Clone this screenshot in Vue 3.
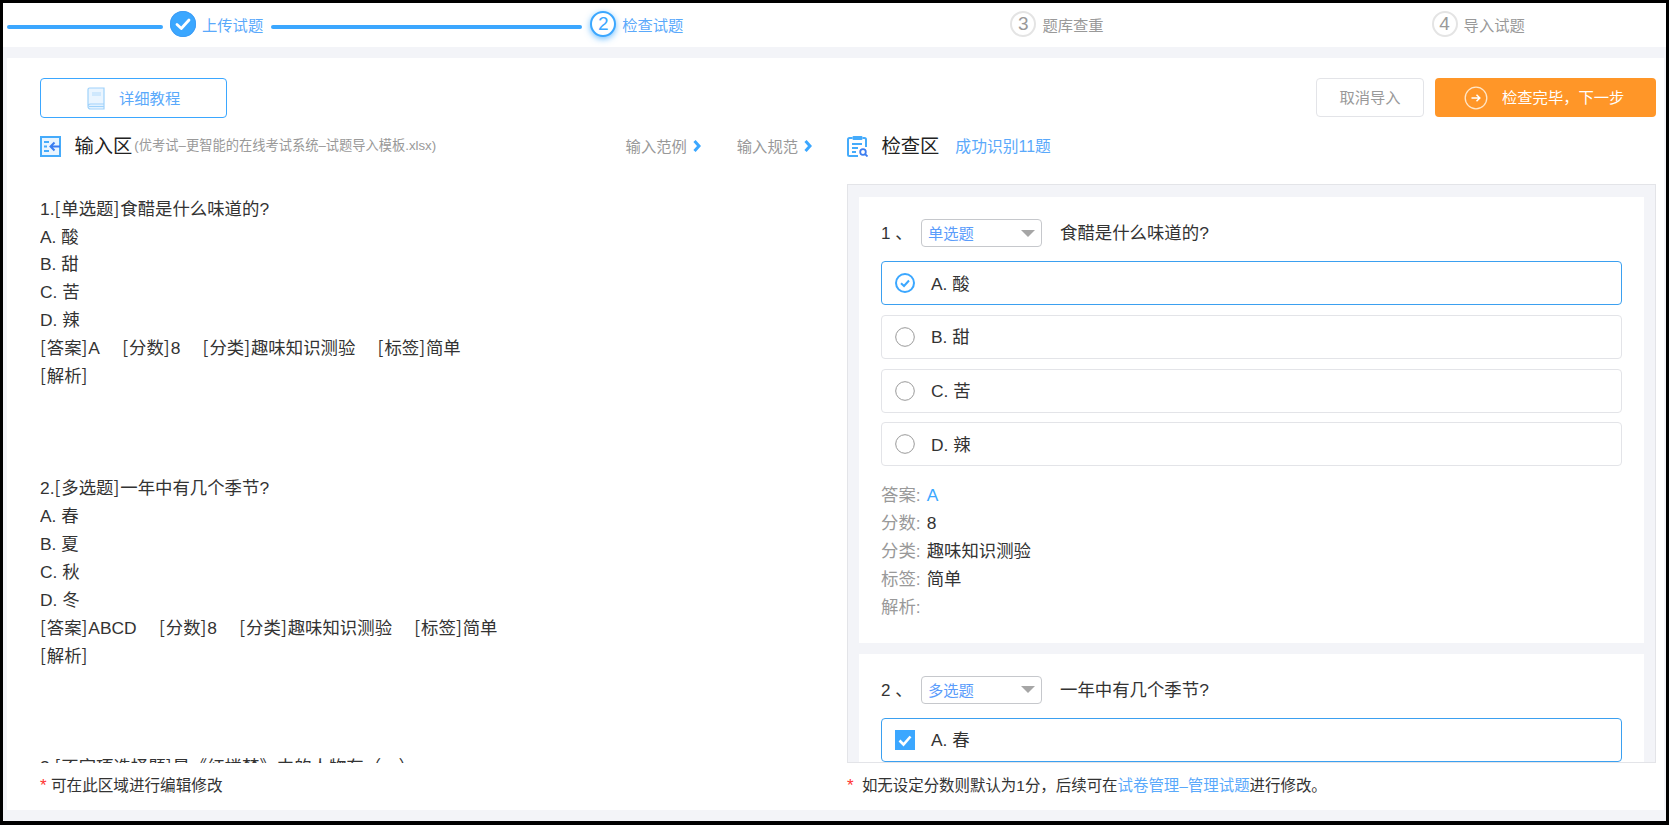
<script setup>
const leftBlocks = [
  ['1.[单选题]食醋是什么味道的?', 'A. 酸', 'B. 甜', 'C. 苦', 'D. 辣', '[答案]A|[分数]8|[分类]趣味知识测验|[标签]简单', '[解析]', '', '', ''],
  ['2.[多选题]一年中有几个季节?', 'A. 春', 'B. 夏', 'C. 秋', 'D. 冬', '[答案]ABCD|[分数]8|[分类]趣味知识测验|[标签]简单', '[解析]', '', '', ''],
  ['3.[不定项选择题]是《红楼梦》中的人物有（　）']
]
const leftLines = leftBlocks.flat().map(line => line.split('|').map(field => field.split(/(\[|\])/)))
const options = [
  { text: 'A. 酸', on: true },
  { text: 'B. 甜', on: false },
  { text: 'C. 苦', on: false },
  { text: 'D. 辣', on: false }
]
const meta = [
  ['分数:', '8'],
  ['分类:', '趣味知识测验'],
  ['标签:', '简单'],
  ['解析:', '']
]
</script>

<template>
  <div class="shell">
    <header class="steps">
      <span class="line first"></span>
      <div class="step active">
        <span class="dot done">
          <svg width="16" height="14" viewBox="0 0 16 14"><path d="M2 7.5 6.3 11.5 14 3" fill="none" stroke="#fff" stroke-width="2.8" stroke-linecap="round" stroke-linejoin="round"/></svg>
        </span>
        <span class="label">上传试题</span>
      </div>
      <span class="line second"></span>
      <div class="step active">
        <span class="dot current">2</span>
        <span class="label">检查试题</span>
      </div>
      <div class="step third">
        <span class="dot idle">3</span>
        <span class="label">题库查重</span>
      </div>
      <div class="step fourth">
        <span class="dot idle">4</span>
        <span class="label">导入试题</span>
      </div>
    </header>

    <div class="canvas">
      <main class="panel">
        <div class="toolbar">
          <button class="tutorial">
            <svg class="book" width="18" height="23" viewBox="0 0 18 23">
              <path d="M1 19V2.5C1 1.7 1.7 1 2.5 1H17V22H3.5C2 22 1 21 1 19.5 1 18 2 17 3.5 17H17" fill="#eaf5ff" stroke="#9fd2fb" stroke-width="1.2"/>
              <path d="M5 5h9v4H5z" fill="#cfe8fd"/>
              <path d="M2 19.5h15" stroke="#9fd2fb" stroke-width="1.2"/>
            </svg>
            <span class="label">详细教程</span>
          </button>
          <div class="actions">
            <button class="cancel">取消导入</button>
            <button class="next">
              <svg width="24" height="24" viewBox="0 0 24 24">
                <circle cx="12" cy="12" r="10.8" fill="none" stroke="#ffe6c8" stroke-width="1.3"/>
                <path d="M7.5 12h8M12.5 8.8 15.8 12l-3.3 3.2" fill="none" stroke="#fff" stroke-width="1.5"/>
              </svg>
              <span class="label">检查完毕，下一步</span>
            </button>
          </div>
        </div>

        <div class="cols">
          <section class="col">
            <div class="head">
              <svg class="head-icon" width="21" height="21" viewBox="0 0 21 21">
                <rect x="1" y="1" width="19" height="19" fill="#eaf5ff" stroke="#45abfb" stroke-width="2"/>
                <path d="M4 6h5M4 10.500h3M4 15h5" stroke="#45abfb" stroke-width="2"/>
                <path d="M20 10.500h-9M14.500 6.500l-4 4 4 4" fill="none" stroke="#3c7df0" stroke-width="2"/>
              </svg>
              <h2>输入区</h2>
              <span class="file">(优考试–更智能的在线考试系统–试题导入模板.xlsx)</span>
              <a class="more first-more"><span>输入范例</span>
                <svg width="8" height="12" viewBox="0 0 8 12"><path d="M1.500 1 6 6l-4.500 5" fill="none" stroke="#3ba7ff" stroke-width="3"/></svg>
              </a>
              <a class="more"><span>输入规范</span>
                <svg width="8" height="12" viewBox="0 0 8 12"><path d="M1.500 1 6 6l-4.500 5" fill="none" stroke="#3ba7ff" stroke-width="3"/></svg>
              </a>
            </div>
            <div class="source">
              <div v-for="(line, i) in leftLines" :key="i" class="source-line">
                <span v-for="(field, j) in line" :key="j" class="field"><span v-for="(seg, k) in field" :key="k" :class="{ bracket: seg === '[' || seg === ']' }">{{ seg }}</span></span>
              </div>
            </div>
            <p class="note"><i>*</i> 可在此区域进行编辑修改</p>
          </section>

          <section class="col">
            <div class="head">
              <svg class="head-icon" width="21" height="22" viewBox="0 0 21 22">
                <path d="M5.500 3H2.500C1.700 3 1 3.700 1 4.500V19.500C1 20.300 1.700 21 2.500 21H11M15.500 3H17.500C18.300 3 19 3.700 19 4.500V12" fill="none" stroke="#45abfb" stroke-width="2"/>
                <rect x="5.500" y="1" width="10" height="4" rx="1" fill="#45abfb"/>
                <path d="M5 9h10M5 13h6M5 17h4" stroke="#45abfb" stroke-width="2"/>
                <circle cx="16" cy="17" r="2.800" fill="none" stroke="#3c7df0" stroke-width="1.800"/>
                <path d="M18 19l2.500 2.500" stroke="#3c7df0" stroke-width="1.800"/>
              </svg>
              <h2>检查区</h2>
              <span class="found">成功识别11题</span>
            </div>
            <div class="review">
              <article class="card">
                <div class="q-row">
                  <span class="num">1 、</span>
                  <div class="select"><span>单选题</span><b class="caret"></b></div>
                  <span class="q-title">食醋是什么味道的?</span>
                </div>
                <div v-for="o in options" :key="o.text" class="option" :class="{ on: o.on }">
                  <svg v-if="o.on" width="20" height="20" viewBox="0 0 20 20">
                    <circle cx="10" cy="10" r="9" fill="none" stroke="#3ba7ff" stroke-width="2"/>
                    <path d="M6 10.200 9 13l5-5.500" fill="none" stroke="#3ba7ff" stroke-width="2"/>
                  </svg>
                  <svg v-else width="20" height="20" viewBox="0 0 20 20">
                    <circle cx="10" cy="10" r="9.300" fill="none" stroke="#999" stroke-width="1"/>
                  </svg>
                  <span>{{ o.text }}</span>
                </div>
                <dl class="meta">
                  <div><dt>答案:</dt><dd class="answer">A</dd></div>
                  <div v-for="m in meta" :key="m[0]"><dt>{{ m[0] }}</dt><dd>{{ m[1] }}</dd></div>
                </dl>
              </article>
              <article class="card">
                <div class="q-row">
                  <span class="num">2 、</span>
                  <div class="select"><span>多选题</span><b class="caret"></b></div>
                  <span class="q-title">一年中有几个季节?</span>
                </div>
                <div class="option on">
                  <svg width="20" height="20" viewBox="0 0 20 20">
                    <rect width="20" height="20" fill="#3ba7ff"/>
                    <path d="M4.500 10.500 8.500 14.500 15.500 6.500" fill="none" stroke="#fff" stroke-width="2.600"/>
                  </svg>
                  <span>A. 春</span>
                </div>
              </article>
            </div>
            <p class="note wide"><i>*</i> 如无设定分数则默认为1分，后续可在<a>试卷管理–管理试题</a>进行修改。</p>
          </section>
        </div>
      </main>
    </div>
  </div>
</template>

<style>
html, body { margin: 0; background: #000; }
</style>

<style scoped>
.shell {
  box-sizing: border-box;
  width: 1669px;
  height: 825px;
  padding: 3px 3px 4px;
  background: #000;
  display: flex;
  flex-direction: column;
  font-family: "Liberation Sans", "Noto Sans CJK SC", sans-serif;
  color: #333;
  overflow: hidden;
}
.steps {
  flex: none;
  height: 44px;
  background: #fff;
  display: flex;
  align-items: center;
  padding-left: 4px;
  box-sizing: border-box;
  font-size: 15.300px;
}
.line {
  height: 4px;
  border-radius: 2px;
  background: #3ba7ff;
  margin-top: 3px;
  flex: none;
}
.line.first { width: 156px; margin-right: 7px; }
.line.second { width: 311px; margin: 3px 8px 0 8px; }
.step {
  display: flex;
  align-items: center;
  gap: 6px;
  color: #999;
  flex: none;
}
.step.active { color: #5aa9fb; }
.step.third { margin-left: 327px; }
.step.fourth { margin-left: 328px; }
.label { margin-bottom: 3px; }
.dot {
  box-sizing: border-box;
  width: 26px;
  height: 26px;
  border-radius: 50%;
  display: flex;
  align-items: center;
  justify-content: center;
  font-size: 19px;
  margin-top: -2px;
}
.done { background: #3ba7ff; box-shadow: inset 0 0 0 1px #3f9df5; }
.current {
  border: 2px solid #3ba7ff;
  color: #3ba7ff;
  background: #fff;
  box-shadow: 0 2px 6px rgba(59, 167, 255, .7);
}
.idle { border: 2px solid #e4e4e4; color: #999; background: #fff; }

.canvas {
  flex: 1;
  min-height: 0;
  background: #f3f4f8;
  padding: 11px 2px 11px 4px;
  display: flex;
}
.panel {
  flex: 1;
  background: #fff;
  padding: 20px 8px 0 33px;
  box-sizing: border-box;
}
.toolbar {
  display: flex;
  justify-content: space-between;
  align-items: flex-start;
  height: 40px;
  margin-bottom: 12px;
}
button {
  font: inherit;
  font-size: 15.300px;
  box-sizing: border-box;
  border-radius: 4px;
  cursor: pointer;
}
.tutorial {
  width: 187px;
  height: 40px;
  background: #fff;
  border: 1px solid #3ba7ff;
  color: #5aa9fb;
  display: flex;
  align-items: center;
  padding: 0 0 0 46px;
  gap: 14px;
}
.actions { display: flex; gap: 11px; }
.cancel {
  width: 108px;
  height: 39px;
  background: #fff;
  border: 1px solid #e3e4e8;
  color: #999;
  padding: 0 0 3px;
}
.next {
  width: 221px;
  height: 39px;
  background: #ff9628;
  border: none;
  color: #fff;
  display: flex;
  align-items: center;
  padding: 0 0 0 29px;
  gap: 14px;
}
.cols {
  display: grid;
  grid-template-columns: 772px 809px;
  column-gap: 35px;
}
.col { min-width: 0; }
.head {
  height: 32px;
  display: flex;
  align-items: center;
  margin-bottom: 22px;
}
.head h2 {
  margin: 0 0 2px 13.500px;
  font-size: 19.300px;
  font-weight: 400;
  color: #222;
}
.head-icon { flex: none; }
.file { font-size: 13.250px; color: #999; margin: 0 0 3px 2px; }
.found { font-size: 15.800px; color: #5aa9fb; margin: 0 0 1px 16px; }
.more {
  font-size: 15.300px;
  color: #999;
  display: flex;
  align-items: center;
  gap: 6px;
  margin-left: 36px;
}
.more span { margin-bottom: 3px; }
.first-more { margin-left: auto; }
.source {
  box-sizing: border-box;
  height: 579px;
  padding-top: 11.600px;
  overflow: hidden;
  font-size: 17.400px;
  line-height: 27.950px;
  color: #333;
}
.source-line { height: 27.950px; white-space: pre; display: flex; }
.field { margin-right: 22.300px; }
.bracket {
  font-family: "Noto Sans CJK SC", sans-serif;
  line-height: 1;
  letter-spacing: .9px;
}
.note {
  margin: 0;
  height: 46px;
  line-height: 46px;
  font-size: 15.600px;
  color: #333;
  white-space: nowrap;
}
.note i { color: #f33; font-style: normal; font-size: 17px; }
.note.wide { font-size: 15.450px; }
.note.wide i { margin-right: 4px; }
.note a { color: #5aa9fb; }

.review {
  box-sizing: border-box;
  height: 579px;
  overflow: hidden;
  background: #f3f4f8;
  border: 1px solid #e3e4e8;
  padding: 12px 11px 0;
}
.card {
  background: #fff;
  padding: 22px 22px 22px;
  margin-bottom: 11px;
}
.q-row {
  display: flex;
  align-items: center;
  height: 28px;
  margin-bottom: 14px;
  font-size: 17.400px;
}
.num { width: 40px; flex: none; font-size: 17px; margin-bottom: 3px; }
.select {
  box-sizing: border-box;
  width: 121px;
  height: 28px;
  border: 1px solid #c6c8cc;
  border-radius: 4px;
  display: flex;
  align-items: center;
  justify-content: space-between;
  padding: 0 6px 0 6px;
  font-size: 15.300px;
  color: #5a9cfb;
}
.select span { margin-bottom: 2px; }
.caret {
  width: 0;
  height: 0;
  border-left: 7px solid transparent;
  border-right: 7px solid transparent;
  border-top: 7px solid #a6a6a6;
}
.q-title { margin: 0 0 3px 18px; color: #333; }
.option {
  box-sizing: border-box;
  height: 44px;
  border: 1px solid #e3e4e8;
  border-radius: 4px;
  display: flex;
  align-items: center;
  padding-left: 13px;
  gap: 16px;
  margin-bottom: 9.800px;
  font-size: 17.400px;
}
.option span { margin-bottom: 2px; }
.option.on { border-color: #3ba0f0; }
.meta {
  margin: 14.600px 0 0;
  font-size: 17.400px;
  line-height: 28px;
}
.meta div { display: flex; height: 28px; gap: 6px; }
.meta dt { color: #999; }
.meta dd { margin: 0; color: #333; }
.meta .answer { color: #3ba7ff; }
</style>
